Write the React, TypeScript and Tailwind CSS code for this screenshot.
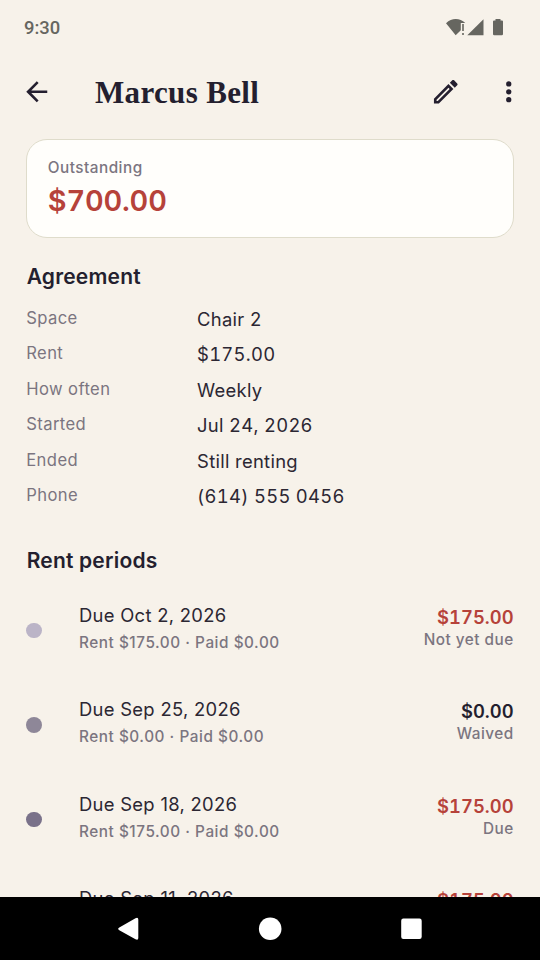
const agreement = [
  { label: "Space", value: "Chair 2" },
  { label: "Rent", value: "$175.00" },
  { label: "How often", value: "Weekly" },
  { label: "Started", value: "Jul 24, 2026" },
  { label: "Ended", value: "Still renting" },
  { label: "Phone", value: "(614) 555 0456" },
];

const periods = [
  { due: "Due Oct 2, 2026", detail: "Rent $175.00 · Paid $0.00", amount: "$175.00", status: "Not yet due", dot: "bg-[#bbb4c7]", tone: "text-[#b6423a]" },
  { due: "Due Sep 25, 2026", detail: "Rent $0.00 · Paid $0.00", amount: "$0.00", status: "Waived", dot: "bg-[#8e8798]", tone: "text-[#241f2f]" },
  { due: "Due Sep 18, 2026", detail: "Rent $175.00 · Paid $0.00", amount: "$175.00", status: "Due", dot: "bg-[#7a728a]", tone: "text-[#b6423a]" },
  { due: "Due Sep 11, 2026", detail: "Rent $175.00 · Paid $0.00", amount: "$175.00", status: "Due", dot: "bg-[#7a728a]", tone: "text-[#b6423a]" },
];

function StatusBar() {
  return (
    <div className="flex h-14 items-center justify-between pl-6 pr-[31px]">
      <span className="font-[Roboto,sans-serif] text-[18.4px] font-medium leading-none text-[#666660]">9:30</span>
      <svg width="64" height="20" viewBox="445 18 64 20" fill="#666660">
        <path d="M446 23.2Q450.500 19 455.700 19Q461 19 465.300 23H460.800V30.300L455.700 35.300Z" />
        <path d="M462.200 24h1.600v7h-1.600zM462.200 33h1.600v2h-1.600z" />
        <path d="M467.300 35.200L483.500 19.200V35.200Z" />
        <path d="M495.500 20.400V19h5v1.400h1.500q1 0 1 1V34q0 1.200-1.200 1.200h-7.600Q493 35.200 493 34V21.400q0-1 1-1z" />
      </svg>
    </div>
  );
}

function TopBar() {
  return (
    <header className="flex h-[71px] items-center pl-[21px] pr-[16px]">
      <svg width="31.5" height="31.5" viewBox="0 0 24 24" fill="#241f2f">
        <path d="M20 11H7.830l5.590-5.590L12 4l-8 8 8 8 1.410-1.410L7.830 13H20v-2z" />
      </svg>
      <h1 className="ml-[42.500px] mt-[2px] flex-1 whitespace-nowrap font-['Liberation_Serif',serif] text-[31px] font-bold leading-9 tracking-[0.350px] text-[#241f2f]">Marcus Bell</h1>
      <svg className="mr-[31.500px]" width="31.5" height="31.5" viewBox="0 0 24 24" fill="#241f2f">
        <path d="M14.060 9.020l.92.92L5.920 19H5v-.92l9.060-9.060M17.660 3c-.25 0-.51.1-.7.290l-1.830 1.830 3.750 3.750 1.830-1.830c.39-.39.39-1.020 0-1.410l-2.340-2.340c-.2-.2-.45-.29-.71-.29zm-3.600 3.190L3 17.250V21h3.750L17.810 9.940l-3.750-3.750z" />
      </svg>
      <svg width="31.5" height="31.5" viewBox="0 0 24 24" fill="#241f2f">
        <circle cx="12" cy="6" r="2" />
        <circle cx="12" cy="12" r="2" />
        <circle cx="12" cy="18" r="2" />
      </svg>
    </header>
  );
}

function NavBar() {
  return (
    <nav className="h-[63px] shrink-0 bg-black">
      <svg width="540" height="63" viewBox="0 0 540 63" fill="#fff">
        <path d="M119.300 30.500L135.500 21.200Q138.300 20 138.300 22.500V41Q138.300 43.500 135.500 42.300L119.300 33.200Q117 31.800 119.300 30.500Z" />
        <circle cx="270.200" cy="31.800" r="11.300" />
        <rect x="401.200" y="21.500" width="20.500" height="20.500" rx="2.200" />
      </svg>
    </nav>
  );
}

export default function App() {
  return (
    <div className="flex h-[960px] w-[540px] flex-col overflow-hidden bg-[#f7f2ea] font-[Inter,sans-serif] text-[#241f2f]">
      <StatusBar />
      <TopBar />
      <main className="min-h-0 flex-1 overflow-hidden px-[26.250px] pt-[12px]">
        <section className="h-[99px] rounded-[21px] border-[1.300px] border-[#dfdccb] bg-[#fffefb] pl-[20.500px] pt-[17px]">
          <p className="text-[15.300px] font-medium leading-[21px] tracking-[0.500px] text-[#7b7580]">Outstanding</p>
          <p className="mt-[4px] text-[28.900px] font-semibold tabular-nums leading-[37px] tracking-[-0.150px] text-[#b6423a]">$700.00</p>
        </section>

        <h2 className="mt-[25px] pl-[0.400px] text-[21px] font-semibold leading-7 tracking-[0.200px]">Agreement</h2>
        <dl className="mt-[14px]">
          {agreement.map((row) => (
            <div key={row.label} className="flex h-[35.450px] items-start">
              <dt className="w-[170.800px] text-[16.600px] leading-[26px] tracking-[0.400px] text-[#7b7580]">{row.label}</dt>
              <dd className="mt-[2px] text-[18.400px] tabular-nums leading-[25px] tracking-[0.300px] text-[#2c2733]">{row.value}</dd>
            </div>
          ))}
        </dl>

        <h2 className="mt-[29px] pl-[0.400px] text-[21px] font-semibold leading-7 tracking-[0.200px]">Rent periods</h2>
        <ul className="mt-[8.500px]">
          {periods.map((p) => (
            <li key={p.due} className="flex h-[94.500px] items-center">
              <span className={`size-[15.750px] shrink-0 rounded-full ${p.dot}`} />
              <div className="-mt-[4px] ml-[37px] flex-1">
                <p className="text-[18.400px] leading-[28px] tracking-[0.300px] text-[#2c2733]">{p.due}</p>
                <p className="text-[15.300px] font-medium leading-[27px] tracking-[0.550px] text-[#7b7580]">{p.detail}</p>
              </div>
              <div className="-mt-[6px] text-right">
                <p className={`text-[18.400px] font-semibold tabular-nums leading-[24px] tracking-[0.050px] ${p.tone}`}>{p.amount}</p>
                <p className="text-[15.300px] font-medium leading-[21px] tracking-[0.500px] text-[#7b7580]">{p.status}</p>
              </div>
            </li>
          ))}
        </ul>
      </main>
      <NavBar />
    </div>
  );
}
